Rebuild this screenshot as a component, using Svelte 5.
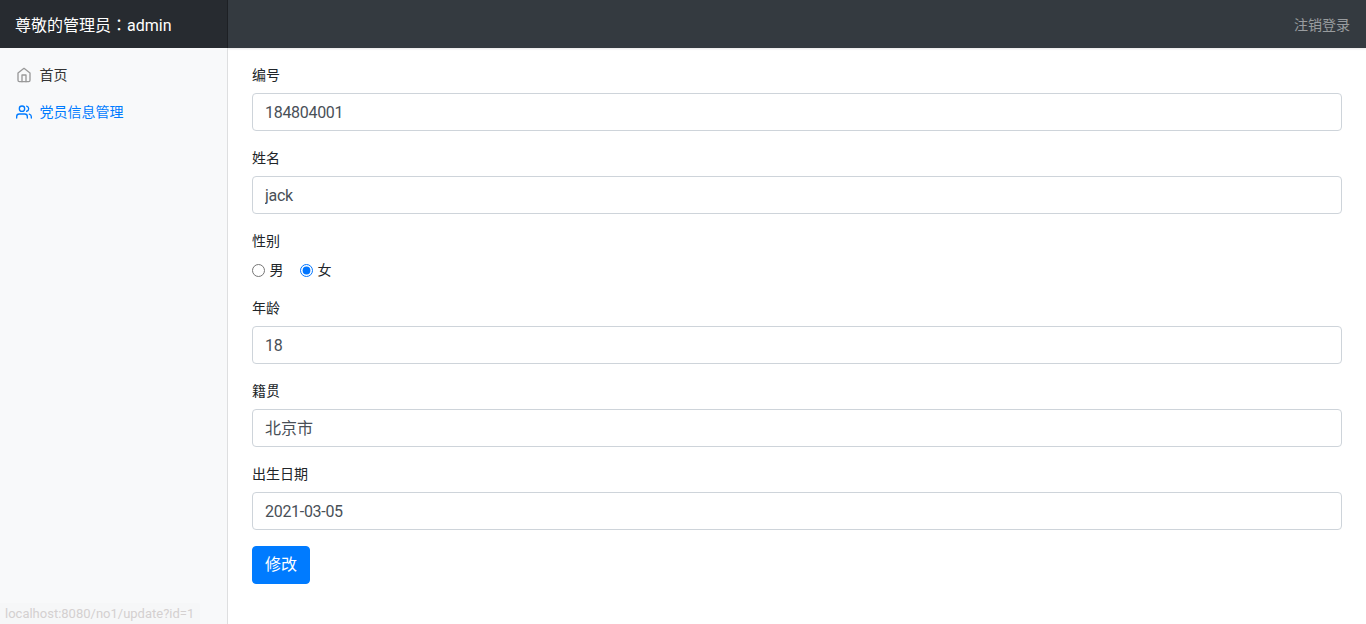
<script>
	const before = [
		{ label: '编号', value: '184804001' },
		{ label: '姓名', value: 'jack' }
	];
	const after = [
		{ label: '年龄', value: '18' },
		{ label: '籍贯', value: '北京市', cjk: true },
		{ label: '出生日期', value: '2021-03-05' }
	];
</script>

<header class="navbar">
	<a class="brand" href="#top">尊敬的管理员<span class="colon">：</span>admin</a>
	<a class="logout" href="#top">注销登录</a>
</header>

<div class="page">
	<nav class="sidebar">
		<a class="nav-link" href="#top">
			<svg class="feather" viewBox="0 0 24 24">
				<path d="M3 9l9-7 9 7v11a2 2 0 0 1-2 2H5a2 2 0 0 1-2-2z" />
				<polyline points="9 22 9 12 15 12 15 22" />
			</svg>
			首页
		</a>
		<a class="nav-link active" href="#top">
			<svg class="feather" viewBox="0 0 24 24">
				<path d="M17 21v-2a4 4 0 0 0-4-4H5a4 4 0 0 0-4 4v2" />
				<circle cx="9" cy="7" r="4" />
				<path d="M23 21v-2a4 4 0 0 0-3-3.87" />
				<path d="M16 3.13a4 4 0 0 1 0 7.75" />
			</svg>
			党员信息管理
		</a>
	</nav>

	<main class="content">
		<form onsubmit={(e) => e.preventDefault()}>
			{#each before as field}
				<div class="form-group">
					<label for={field.label}>{field.label}</label>
					<input id={field.label} type="text" value={field.value} />
				</div>
			{/each}

			<div class="form-group">
				<span class="label">性别</span>
				<div class="radios">
					<label class="radio"><input type="radio" name="sex" /> 男</label>
					<label class="radio"><input type="radio" name="sex" checked /> 女</label>
				</div>
			</div>

			{#each after as field}
				<div class="form-group">
					<label for={field.label}>{field.label}</label>
					<input id={field.label} class:cjk={field.cjk} type="text" value={field.value} />
				</div>
			{/each}

			<button type="submit">修改</button>
		</form>
	</main>
</div>

<div class="status">localhost:8080/no1/update?id=1</div>

<style>
	:global(body) {
		font-family: Roboto, "Noto Sans CJK SC", sans-serif;
		font-size: 14px;
		line-height: 1.5;
		color: #212529;
		background: #fff;
		overflow: hidden;
	}

	a {
		text-decoration: none;
	}

	.navbar {
		height: 48px;
		display: flex;
		align-items: center;
		justify-content: space-between;
		background: #343a40;
		box-shadow: 0 1px 2px rgba(0, 0, 0, 0.1);
	}

	.brand {
		width: 228px;
		box-sizing: border-box;
		height: 48px;
		padding: 12px 15px;
		font-size: 16px;
		color: #fff;
		background: rgba(0, 0, 0, 0.25);
		box-shadow: inset -1px 0 0 rgba(0, 0, 0, 0.25);
	}

	.colon {
		font-family: "Noto Sans CJK TC", sans-serif;
	}

	.logout {
		padding: 2px 16px 0;
		color: rgba(255, 255, 255, 0.5);
	}

	.page {
		display: flex;
		height: 576px;
	}

	.sidebar {
		width: 228px;
		flex: none;
		box-sizing: border-box;
		padding-top: 8px;
		background: #f8f9fa;
		box-shadow: inset -1px 0 0 rgba(0, 0, 0, 0.1);
	}

	.nav-link {
		display: block;
		padding: 9px 16px 7px;
		color: #333;
	}

	.nav-link.active {
		color: #007bff;
	}

	.feather {
		width: 16px;
		height: 16px;
		margin-right: 4px;
		vertical-align: text-bottom;
		fill: none;
		stroke: #999;
		stroke-width: 2;
		stroke-linecap: round;
		stroke-linejoin: round;
	}

	.active .feather {
		stroke: currentColor;
	}

	.content {
		flex: 1;
		padding: 16px 24px;
	}

	.form-group {
		margin-bottom: 16px;
	}

	label,
	.label {
		display: block;
		padding-top: 1px;
		margin-bottom: 7px;
	}

	input[type='text'] {
		display: block;
		width: 100%;
		height: 38px;
		box-sizing: border-box;
		padding: 6px 12px;
		font: inherit;
		font-size: 16px;
		letter-spacing: -0.3px;
		color: #495057;
		background: #fff;
		border: 1px solid #ced4da;
		border-radius: 4px;
	}

	input.cjk[type='text'] {
		padding: 4px 12px 6px;
		letter-spacing: 0;
	}

	.radios {
		display: flex;
		gap: 16.5px;
		height: 22px;
		align-items: center;
	}

	.radio {
		padding: 0;
		margin: 0;
	}

	.radio input {
		margin: 0 1px 0 0;
		vertical-align: -2px;
	}

	button {
		display: block;
		width: 58px;
		height: 38px;
		padding: 0;
		font: inherit;
		font-size: 16px;
		color: #fff;
		background: #007bff;
		border: 1px solid #007bff;
		border-radius: 4px;
	}

	.status {
		position: fixed;
		left: 0;
		bottom: 0;
		width: 200px;
		height: 21px;
		padding-left: 5px;
		box-sizing: border-box;
		font-size: 13px;
		line-height: 22px;
		color: #d4d0d0;
		background: #f6f7f8;
		border-top-right-radius: 2px;
	}
</style>
